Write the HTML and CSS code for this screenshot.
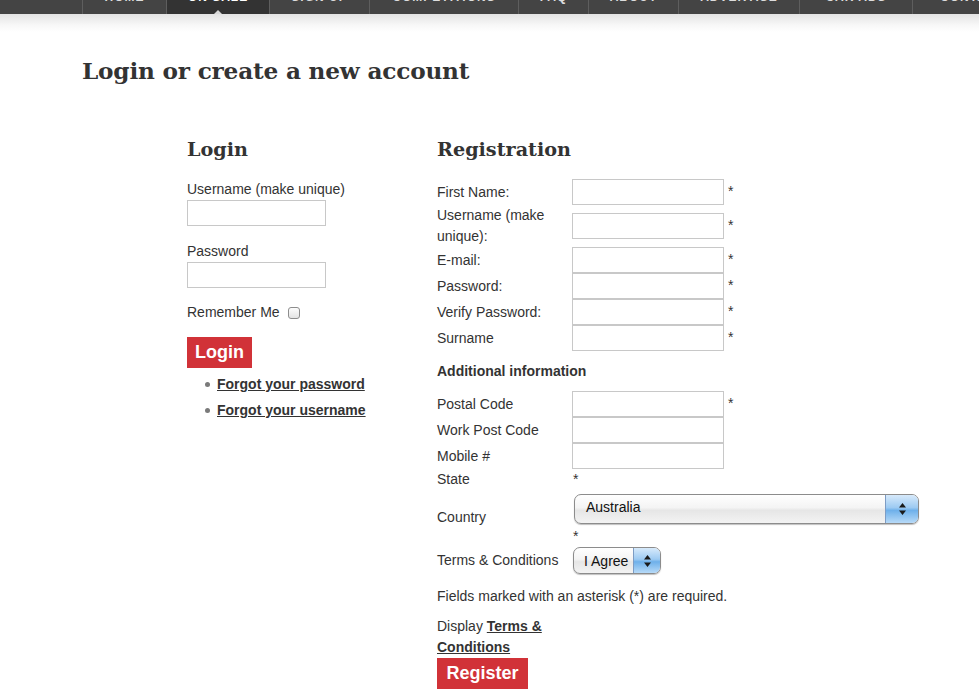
FILE: index.html
```html
<!DOCTYPE html>
<html lang="en">
<head>
<meta charset="utf-8">
<title>Login or create a new account</title>
<link rel="stylesheet" href="styles.css">
</head>
<body>
<header class="topnav">
  <ul class="menu">
    <li class="menu-item"><a href="#">HOME</a></li>
    <li class="menu-item is-active"><a href="#">ON SALE</a></li>
    <li class="menu-item"><a href="#">SIGN UP</a></li>
    <li class="menu-item"><a href="#">COMPETITIONS</a></li>
    <li class="menu-item"><a href="#">FAQ</a></li>
    <li class="menu-item"><a href="#">ABOUT</a></li>
    <li class="menu-item"><a href="#">ADVERTISE</a></li>
    <li class="menu-item"><a href="#">CAR ADS</a></li>
    <li class="menu-item"><a href="#">CONTACT</a></li>
  </ul>
</header>
<div class="shade"></div>

<main class="page">
  <h1 class="page-title">Login or create a new account</h1>

  <div class="columns">
    <section class="login">
      <h2 class="col-title">Login</h2>
      <label class="field-label" for="lu">Username (make unique)</label>
      <input class="text-input short" id="lu" type="text">
      <label class="field-label spaced" for="lp">Password</label>
      <input class="text-input short" id="lp" type="password">
      <div class="remember">
        <span>Remember Me</span>
        <input class="mac-check" type="checkbox">
      </div>
      <button class="red-btn login-btn" type="button">Login</button>
      <ul class="forgot">
        <li><a href="#">Forgot your password</a></li>
        <li><a href="#">Forgot your username</a></li>
      </ul>
    </section>

    <section class="register">
      <h2 class="col-title">Registration</h2>
      <table class="reg-table">
        <tr><td class="lbl">First Name:</td><td><div class="field"><input class="text-input long" type="text"><span class="req">*</span></div></td></tr>
        <tr class="tall"><td class="lbl">Username (make unique):</td><td><div class="field"><input class="text-input long" type="text"><span class="req">*</span></div></td></tr>
        <tr><td class="lbl">E-mail:</td><td><div class="field"><input class="text-input long" type="text"><span class="req">*</span></div></td></tr>
        <tr><td class="lbl">Password:</td><td><div class="field"><input class="text-input long" type="password"><span class="req">*</span></div></td></tr>
        <tr><td class="lbl">Verify Password:</td><td><div class="field"><input class="text-input long" type="password"><span class="req">*</span></div></td></tr>
        <tr><td class="lbl">Surname</td><td><div class="field"><input class="text-input long" type="text"><span class="req">*</span></div></td></tr>
        <tr><td class="section-row" colspan="2">Additional information</td></tr>
        <tr><td class="lbl">Postal Code</td><td><div class="field"><input class="text-input long" type="text"><span class="req">*</span></div></td></tr>
        <tr><td class="lbl">Work Post Code</td><td><div class="field"><input class="text-input long" type="text"></div></td></tr>
        <tr><td class="lbl">Mobile #</td><td><div class="field"><input class="text-input long" type="text"></div></td></tr>
        <tr class="state-row"><td class="lbl">State</td><td class="state-cell">*</td></tr>
        <tr><td class="lbl">Country</td><td>
          <div class="aqua aqua-wide">
            <span class="aqua-value">Australia</span>
            <span class="stepper"><svg width="9" height="14" viewBox="0 0 9 14"><path d="M4.5 1 L8 5.5 H1 Z M1 8.5 H8 L4.5 13 Z" fill="#1a1a1a"/></svg></span>
          </div>
          <div class="req-line">*</div>
        </td></tr>
        <tr class="terms-row"><td class="lbl">Terms &amp; Conditions</td><td>
          <div class="aqua aqua-small">
            <span class="aqua-value">I Agree</span>
            <span class="stepper"><svg width="9" height="14" viewBox="0 0 9 14"><path d="M4.5 1 L8 5.5 H1 Z M1 8.5 H8 L4.5 13 Z" fill="#1a1a1a"/></svg></span>
          </div>
        </td></tr>
      </table>
      <p class="note">Fields marked with an asterisk (*) are required.</p>
      <p class="terms-link">Display <a href="#">Terms &amp; Conditions</a></p>
      <button class="red-btn register-btn" type="button">Register</button>
    </section>
  </div>
</main>
</body>
</html>
```
FILE: styles.css
```css
* { box-sizing: border-box; }
html, body { margin: 0; padding: 0; background: #fff; }
body {
  font-family: "Liberation Sans", Arial, sans-serif;
  font-size: 14px;
  color: #333;
  overflow: hidden;
}

/* top navigation (scrolled, only its bottom is visible) */
.topnav {
  background: #444;
  height: 14px;
  overflow: hidden;
}
.menu {
  list-style: none;
  margin: 0;
  padding: 0 0 0 82px;
  display: flex;
  height: 14px;
}
.menu-item {
  position: relative;
  height: 14px;
  border-left: 1px solid #5e5e5e;
  flex: none;
  text-align: center;
}
.menu-item a {
  display: block;
  margin-top: -10px;
  line-height: 14px;
  font-size: 12px;
  font-weight: bold;
  letter-spacing: 1px;
  color: #ddd;
  text-decoration: none;
}
.menu-item:nth-child(1) { width: 84px; }
.menu-item:nth-child(2) { width: 103px; }
.menu-item:nth-child(3) { width: 100px; }
.menu-item:nth-child(4) { width: 149px; }
.menu-item:nth-child(5) { width: 70px; }
.menu-item:nth-child(6) { width: 90px; }
.menu-item:nth-child(7) { width: 121px; }
.menu-item:nth-child(8) { width: 113px; }
.menu-item:nth-child(9) { width: 120px; }
.menu-item.is-active { background: #333; }
.menu-item.is-active a { color: #fff; }
.menu-item.is-active::after {
  content: "";
  position: absolute;
  left: 50%;
  bottom: 0;
  margin-left: -4px;
  border-left: 4px solid transparent;
  border-right: 4px solid transparent;
  border-bottom: 4px solid #d8d8d8;
}
.shade {
  height: 18px;
  background: linear-gradient(#e3e3e3, #f7f7f7 60%, #fff);
}

/* page */
.page { padding-left: 82px; }
.page-title {
  margin: 24px 0 0;
  font-family: "DejaVu Serif", Georgia, serif;
  font-weight: bold;
  font-size: 23.2px;
  line-height: 30px;
  color: #333;
  letter-spacing: -0.2px;
}
.columns {
  display: flex;
  margin-top: 52px;
  padding-left: 105px;
}
.col-title {
  margin: 0;
  font-family: "DejaVu Serif", Georgia, serif;
  font-weight: bold;
  font-size: 19.2px;
  line-height: 24px;
  color: #333;
}

/* login */
.login { width: 250px; }
.login .col-title { margin-bottom: 18px; }
.field-label {
  display: block;
  line-height: 18px;
}
.field-label.spaced { margin-top: 16px; }
.text-input {
  display: block;
  height: 26px;
  border: 1px solid #c8c8c8;
  background: #fff;
  margin: 2px 0 0;
  padding: 0 4px;
  font: inherit;
}
.text-input.short { width: 139px; }
.text-input.long { width: 152px; margin: 0; }
.remember {
  display: flex;
  align-items: center;
  gap: 8px;
  margin-top: 15px;
  line-height: 18px;
}
.mac-check {
  appearance: none;
  -webkit-appearance: none;
  width: 12px;
  height: 12px;
  margin: 1px 0 0;
  border: 1px solid #8d8d8d;
  border-radius: 3px;
  background: linear-gradient(#fdfdfd, #e4e4e4);
}
.red-btn {
  display: block;
  height: 31px;
  border: 0;
  border-radius: 0;
  background: #d13238;
  color: #fff;
  font-family: "Liberation Sans", Arial, sans-serif;
  font-weight: bold;
  font-size: 18px;
  padding: 0 8px;
  cursor: pointer;
}
.login-btn { margin-top: 16px; width: 65px; }
.forgot {
  list-style: none;
  margin: 3px 0 0;
  padding: 0;
}
.forgot li {
  display: flex;
  align-items: center;
  line-height: 26px;
}
.forgot li::before {
  content: "";
  width: 5px;
  height: 5px;
  border-radius: 50%;
  background: #7a7a7a;
  margin: 0 7px 0 18px;
}
.forgot a, .terms-link a {
  color: #333;
  font-weight: bold;
  text-decoration: underline;
}

/* registration */
.register { width: 500px; }
.register .col-title { margin-bottom: 17px; }
.reg-table {
  border-collapse: collapse;
  border-spacing: 0;
}
.reg-table td {
  padding: 0;
  vertical-align: middle;
}
.reg-table td.lbl {
  width: 135px;
  line-height: 21px;
  padding-right: 8px;
}
.field {
  display: flex;
  align-items: center;
  gap: 4px;
  height: 26px;
}
.req {
  font-size: 14px;
  line-height: 14px;
  height: 14px;
  margin-top: -2px;
}
.reg-table tr.tall .field { margin: 8px 0; }
.section-row {
  height: 40px;
  font-weight: bold;
}
.state-row td { height: 20px; line-height: 20px; }
.state-cell { vertical-align: top !important; padding-left: 1px !important; }
.req-line {
  line-height: 18px;
  margin-top: 3px;
  padding-left: 1px;
}

.aqua {
  display: flex;
  align-items: stretch;
  border: 1px solid #8c8c8c;
  border-radius: 7px;
  overflow: hidden;
  background: linear-gradient(#ffffff, #f4f4f4 45%, #e6e6e6 55%, #f3f3f3);
  box-shadow: 0 1px 1px rgba(0,0,0,0.25);
  font-family: "Liberation Sans", "Lucida Grande", sans-serif;
  font-size: 14px;
  color: #111;
}
.aqua-wide {
  width: 345px;
  height: 30px;
  margin: 4px 0 0 2px;
}
.aqua-small {
  width: 88px;
  height: 27px;
  margin: 2px 0 1px 1px;
}
.aqua-value {
  flex: 1;
  display: flex;
  align-items: center;
  padding: 0 0 5px 11px;
}
.aqua-small .aqua-value { padding: 1px 0 0 10px; }
.stepper {
  flex: none;
  width: 33px;
  display: flex;
  align-items: center;
  justify-content: center;
  border-left: 1px solid #7d9cc4;
  background: linear-gradient(#d7eafb, #9dcaf2 45%, #6eb0ea 55%, #b7daf8);
}
.aqua-small .stepper { width: 27px; }

.note {
  margin: 11px 0 0;
  line-height: 21px;
}
.terms-link {
  margin: 9px 0 0;
  width: 135px;
  line-height: 21px;
}
.register-btn { width: 91px; }
```
